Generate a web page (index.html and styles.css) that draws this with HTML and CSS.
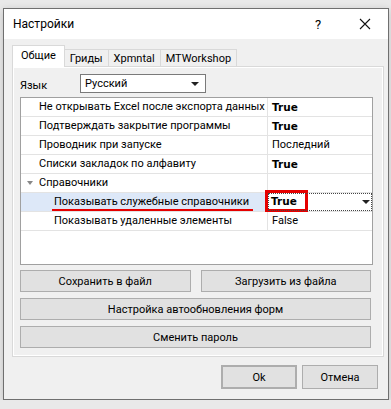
FILE: index.html
```html
<!DOCTYPE html>
<html lang="ru">
<head>
  <meta charset="UTF-8">
  <title>Настройки</title>
  <link rel="stylesheet" href="styles.css">
</head>
<body>

<div class="window">
  <div class="titlebar">
    <span class="title">Настройки</span>
    <span class="help">?</span>
    <span class="close">
      <svg width="12" height="12" viewBox="0 0 12 12"><path d="M1 1 L11 11 M11 1 L1 11" stroke="#111" stroke-width="1.1" fill="none"/></svg>
    </span>
  </div>

  <div class="content">
    <div class="tabs">
      <div class="tab active">Общие</div>
      <div class="tab">Гриды</div>
      <div class="tab">Xpmntal</div>
      <div class="tab">MTWorkshop</div>
    </div>

    <div class="panel">
      <div class="lang-row">
        <span class="lang-label">Язык</span>
        <div class="combo">
          <span>Русский</span>
          <span class="arrow"></span>
        </div>
      </div>

      <div class="grid">
        <div class="row">
          <div class="gutter"></div>
          <div class="name">Не открывать Excel после экспорта данных</div>
          <div class="value bold">True</div>
        </div>
        <div class="row">
          <div class="gutter"></div>
          <div class="name">Подтверждать закрытие программы</div>
          <div class="value bold">True</div>
        </div>
        <div class="row">
          <div class="gutter"></div>
          <div class="name">Проводник при запуске</div>
          <div class="value">Последний</div>
        </div>
        <div class="row">
          <div class="gutter"></div>
          <div class="name">Списки закладок по алфавиту</div>
          <div class="value bold">True</div>
        </div>
        <div class="row category">
          <div class="gutter"><span class="expander"></span></div>
          <div class="name">Справочники</div>
          <div class="value"></div>
        </div>
        <div class="row selected">
          <div class="gutter"></div>
          <div class="name child"><span class="underlined">Показывать служебные справочники</span></div>
          <div class="value bold editing">
            <span class="marked">True</span>
            <span class="arrow"></span>
          </div>
        </div>
        <div class="row">
          <div class="gutter"></div>
          <div class="name child">Показывать удаленные элементы</div>
          <div class="value">False</div>
        </div>
      </div>

      <div class="btn-row">
        <button class="btn">Сохранить в файл</button>
        <button class="btn">Загрузить из файла</button>
      </div>
      <button class="btn wide">Настройка автообновления форм</button>
      <button class="btn wide">Сменить пароль</button>
    </div>

    <div class="footer">
      <button class="btn dialog default">Ok</button>
      <button class="btn dialog">Отмена</button>
    </div>
  </div>
</div>

</body>
</html>
```

FILE: styles.css
```css
body {
  margin: 0;
  padding: 8px 0 0 3px;
  background: #e9e9e9;
  font-family: 'Roboto', 'Noto Sans', sans-serif;
  font-size: 11px;
  color: #000;
}

.window {
  width: 384px;
  border: 1px solid #6f6f6f;
  background: #f0f0f0;
  box-shadow: 0 2px 8px rgba(0, 0, 0, 0.18);
}

.titlebar {
  height: 30px;
  background: #fff;
  display: flex;
  align-items: center;
  padding-left: 9px;
}

.title {
  flex: 1;
  font-size: 12px;
}

.help {
  width: 48px;
  text-align: center;
  font-size: 13px;
}

.close {
  width: 46px;
  display: flex;
  justify-content: center;
}

.content {
  box-sizing: border-box;
  padding: 7px 10px 0 8px;
  height: 360px;
}

/* tabs */
.tabs {
  display: flex;
  align-items: flex-end;
  height: 20px;
  position: relative;
  z-index: 1;
}

.tab {
  height: 16px;
  line-height: 17px;
  padding: 0 5px;
  border: 1px solid #d9d9d9;
  border-bottom: none;
  background: #f0f0f0;
  margin-left: -1px;
}

.tab:first-child {
  margin-left: 0;
}

.tab.active {
  height: 21px;
  line-height: 19px;
  background: #fff;
  padding: 0 8px;
  margin-bottom: -1px;
  z-index: 2;
}

.panel {
  width: 363px;
  height: 282px;
  border: 1px solid #d9d9d9;
  box-shadow: inset 0 0 0 1px #fff;
  padding: 7px 0 0 7px;
}

.lang-row {
  display: flex;
  align-items: center;
  height: 19px;
}

.lang-label {
  width: 60px;
  padding-top: 3px;
}

.combo {
  width: 116px;
  height: 17px;
  border: 1px solid #7a7a7a;
  background: #fff;
  display: flex;
  align-items: center;
  padding: 0 4px;
  justify-content: space-between;
}

.arrow {
  width: 0;
  height: 0;
  border-left: 4px solid transparent;
  border-right: 4px solid transparent;
  border-top: 4px solid #222;
  margin-right: 2px;
}

/* property grid */
.grid {
  margin-top: 4px;
  width: 351px;
  height: 166px;
  border: 1px solid #a0a0a0;
  background: #fff;
}

.row {
  display: flex;
  height: 18px;
  border-bottom: 1px solid #e3e3e3;
}

.gutter {
  width: 17px;
  display: flex;
  align-items: center;
  justify-content: center;
}

.name {
  width: 228px;
  border-right: 1px solid #e3e3e3;
  padding-left: 1px;
  line-height: 18px;
  white-space: nowrap;
  overflow: hidden;
}

.name.child {
  padding-left: 16px;
  width: 213px;
}

.expander {
  width: 0;
  height: 0;
  border-left: 3px solid transparent;
  border-right: 3px solid transparent;
  border-top: 4px solid #888;
}

.value {
  flex: 1;
  padding-left: 4px;
  line-height: 18px;
}

.bold {
  font-weight: bold;
  font-family: 'DejaVu Sans', sans-serif;
  font-size: 10.5px;
}

.selected {
  background: #dde8f8;
}

.selected .value {
  background: #fff;
}

.underlined {
  display: inline-block;
  line-height: 14px;
  border-bottom: 3px solid #e60000;
  margin-left: -2px;
  padding: 0 4px 0 2px;
}

.value.editing {
  display: flex;
  align-items: center;
  justify-content: space-between;
  padding-left: 0;
  outline: 1px dotted #444;
  outline-offset: -1px;
}

.marked {
  border: 3px solid #e60000;
  margin: -4px 0 -2px -3px;
  padding: 0 8px 0 3px;
  line-height: 16px;
}

/* buttons */
.btn {
  font-family: inherit;
  font-size: 11px;
  background: #e1e1e1;
  border: 1px solid #adadad;
  height: 22px;
  padding: 0;
  color: #000;
}

.btn-row {
  display: flex;
  gap: 10px;
  margin-top: 5px;
  width: 351px;
}

.btn-row .btn {
  flex: 1;
}

.btn.wide {
  display: block;
  width: 351px;
  margin-top: 6px;
}

.footer {
  display: flex;
  justify-content: flex-end;
  gap: 5px;
  margin-top: 8px;
}

.btn.dialog {
  width: 76px;
  height: 24px;
}

.btn.default {
  border: 2px solid #adadad;
}
```
